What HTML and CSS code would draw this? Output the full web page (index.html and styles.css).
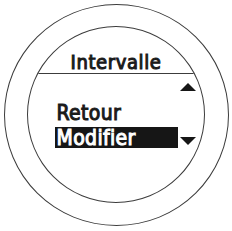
FILE: index.html
```html
<!DOCTYPE html>
<html>
<head>
<meta charset="utf-8">
<link rel="stylesheet" href="styles.css">
</head>
<body>
<div class="bezel">
  <div class="screen">
    <div class="title">Intervalle</div>
    <div class="menu">
      <div class="row row-up">
        <span class="label"></span>
        <svg class="arrow" width="16" height="8" viewBox="0 0 16 8"><polygon points="8,0 16,8 0,8" fill="#161616"/></svg>
      </div>
      <div class="row row-item">
        <span class="label">Retour</span>
      </div>
      <div class="row row-item selected">
        <span class="label">Modifier</span>
        <svg class="arrow arrow-down" width="16" height="8" viewBox="0 0 16 8"><polygon points="0,0 16,0 8,8" fill="#161616"/></svg>
      </div>
    </div>
  </div>
</div>
</body>
</html>
```
FILE: styles.css
```css
html, body {
  margin: 0;
  padding: 0;
  background: #ffffff;
}
body {
  width: 232px;
  height: 231px;
  padding: 4px 0 0 4px;
  box-sizing: border-box;
  font-family: "DejaVu Sans Condensed", "DejaVu Sans", sans-serif;
  color: #1a1a1a;
}
.bezel {
  width: 225px;
  height: 222px;
  box-sizing: border-box;
  border: 1.4px solid #3c3c3c;
  border-radius: 50%;
  display: flex;
  align-items: center;
  justify-content: center;
}
.screen {
  width: 178px;
  height: 177px;
  box-sizing: border-box;
  border: 1.4px solid #3c3c3c;
  border-radius: 50%;
  overflow: hidden;
  display: flex;
  flex-direction: column;
  margin-left: -1px;
  margin-top: -1px;
}
.title {
  font-size: 20px;
  line-height: 19px;
  padding-top: 25.5px;
  padding-bottom: 1.5px;
  text-align: center;
  border-bottom: 1.5px solid #3c3c3c;
  -webkit-text-stroke: 1px currentColor;
  letter-spacing: 0.6px;
}
.menu {
  display: flex;
  flex-direction: column;
  padding-left: 26.5px;
}
.row {
  display: flex;
  align-items: flex-start;
  font-size: 21px;
  line-height: 21px;
  letter-spacing: 0.35px;
  -webkit-text-stroke: 1px currentColor;
}
.label {
  width: 123px;
  box-sizing: border-box;
  padding-left: 2px;
}
.arrow {
  display: block;
  margin-left: 2px;
}
.row-up {
  margin-top: 9px;
  height: 8px;
}
.row-item {
  margin-top: 12px;
  height: 21px;
}
.selected {
  margin-top: 3px;
  height: 21px;
}
.selected .label {
  background: #161616;
  color: #ffffff;
  height: 21px;
  padding-top: 1px;
}
.arrow-down {
  margin-top: 10px;
}
```
